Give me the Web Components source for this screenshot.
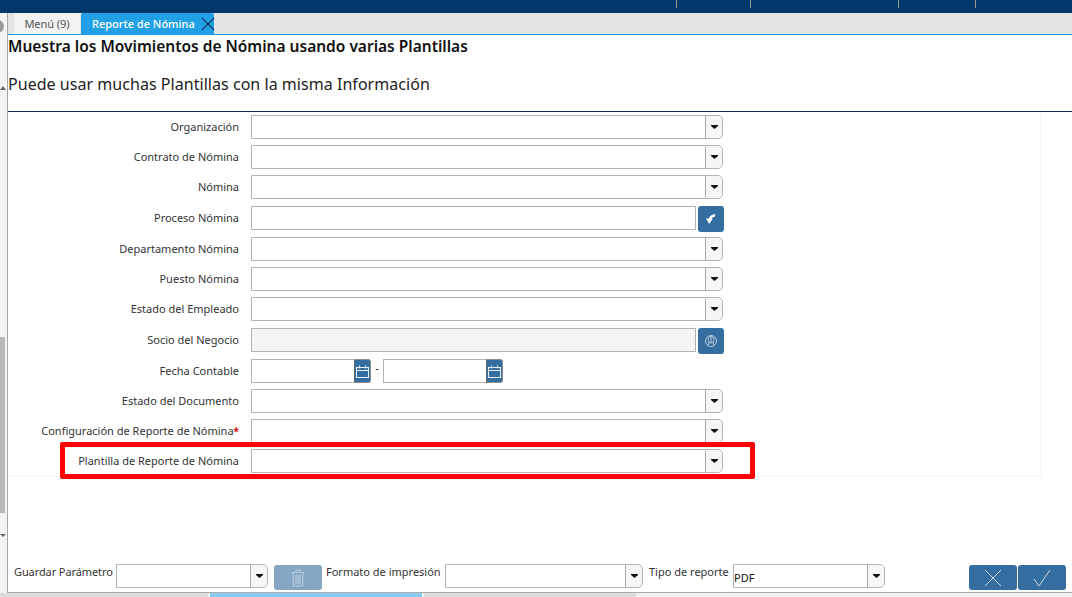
<!DOCTYPE html>
<html lang="es"><head><meta charset="utf-8"><title>Reporte de Nómina</title>
<style>
html,body{margin:0;padding:0;height:597px;width:1072px;overflow:hidden;background:#fff;font-family:"Noto Sans","Open Sans",sans-serif;color:#333}
</style></head><body>
<app-shell>
  <top-bar slot="top"></top-bar>
  <tab-strip slot="tabs"></tab-strip>
  <side-rail slot="rail"></side-rail>
  <process-head slot="head" title-text="Muestra los Movimientos de Nómina usando varias Plantillas" help="Puede usar muchas Plantillas con la misma Información"></process-head>
  <form-panel slot="form">
    <form-field label="Organización" kind="combo"></form-field>
    <form-field label="Contrato de Nómina" kind="combo"></form-field>
    <form-field label="Nómina" kind="combo"></form-field>
    <form-field label="Proceso Nómina" kind="search" icon="back"></form-field>
    <form-field label="Departamento Nómina" kind="combo"></form-field>
    <form-field label="Puesto Nómina" kind="combo"></form-field>
    <form-field label="Estado del Empleado" kind="combo"></form-field>
    <form-field label="Socio del Negocio" kind="search" icon="partner" disabled></form-field>
    <form-field label="Fecha Contable" kind="date"></form-field>
    <form-field label="Estado del Documento" kind="combo"></form-field>
    <form-field label="Configuración de Reporte de Nómina" kind="combo" required></form-field>
    <form-field label="Plantilla de Reporte de Nómina" kind="combo"></form-field>
  </form-panel>
  <action-bar slot="foot"></action-bar>
  <bottom-tabs slot="bottom"></bottom-tabs>
</app-shell>
<script>
const def=(n,html)=>customElements.define(n,class extends HTMLElement{
  constructor(){super();this.attachShadow({mode:'open'});if(typeof html!=='function')this.shadowRoot.innerHTML=html}
  connectedCallback(){if(typeof html==='function')this.shadowRoot.innerHTML=html(this)}
});
const ARROW='<svg width="7" height="4" viewBox="0 0 7 4"><path d="M0 0h7v1L3.500 4 0 1z" fill="#111"/></svg>';

def('app-shell',`<style>
:host{display:grid;grid-template-columns:8px 1fr;grid-template-rows:13px 22px 1fr 33px auto;width:1072px;height:597px;position:relative}
.top{grid-column:1/3}.tabs{grid-column:2;background:#e5e5e5}
.rail{grid-column:1;grid-row:2/5}
.main{grid-column:2;display:flex;flex-direction:column;min-height:0}
.foot{grid-column:2}
.bottom{grid-column:1/3}
</style>
<div class="top"><slot name="top"></slot></div>
<div class="rail"><slot name="rail"></slot></div>
<div class="tabs"><slot name="tabs"></slot></div>
<div class="main"><slot name="head"></slot><slot name="form"></slot></div>
<div class="foot"><slot name="foot"></slot></div>
<div class="bottom"><slot name="bottom"></slot></div>`);

def('top-bar',`<style>
:host{display:block;height:13px;background:#00386b;position:relative}
i{width:1px;height:8px;background:#a09a90;display:block;position:absolute;top:0}
</style><i style="left:676px"></i><i style="left:750px"></i><i style="left:898px"></i><i style="left:975px"></i>`);

def('tab-strip',`<style>
:host{display:flex;height:22px;box-sizing:border-box;border-bottom:1px solid #1e9be6;padding-left:6px;gap:1px;font-size:11px}
div{height:21px;display:flex;align-items:center;box-sizing:border-box}
.a{width:66px;background:#f2f2f2;color:#555;justify-content:center;letter-spacing:-.05px}
.b{width:133px;background:#22a0e6;color:#fff;font-weight:500;padding-left:11px;border-radius:2px 2px 0 0;white-space:nowrap}
svg{margin-left:6px;flex:none}
</style><div class="a">Menú (9)</div><div class="b">Reporte de Nómina<svg width="14" height="14" viewBox="0 0 14 14"><path d="M1 1l12 12M13 1L1 13" stroke="#0c3a63" stroke-width="1.2" fill="none"/></svg></div>`);

def('side-rail',`<style>
:host{display:block;height:100%;background:#f3f3f3;border-right:1px solid #a8a8a8;box-sizing:border-box;width:8px;position:relative;overflow:hidden}
.c{position:absolute;left:-9px;top:7px;width:13px;height:13px;border-radius:50%;background:#999}
.t{position:absolute;left:0;top:324px;width:5px;height:176px;background:#b9b9b9}
.u,.d{position:absolute;left:0;width:0;height:0;border-left:3px solid transparent;border-right:3px solid transparent}
.u{top:73px;border-bottom:4px solid #666}.d{top:521px;border-top:3px solid #666}
</style><div class="c"></div><div class="u"></div><div class="t"></div><div class="d"></div>`);

def('process-head',h=>`<style>
:host{display:block;height:77px;box-sizing:border-box;border-bottom:1px solid #0a2f52;color:#111}
h1{margin:0;font-size:15.5px;line-height:22px;font-weight:600}
p{margin:16px 0 0;font-size:16px;line-height:22px;color:#222;letter-spacing:.04px}
</style><h1>${h.getAttribute('title-text')||''}</h1><p>${h.getAttribute('help')||''}</p>`);

def('form-panel',`<style>
:host{display:block;width:1033px;height:364.8px;box-sizing:border-box;padding-top:3px;border-right:1px solid #f5f5f5;border-bottom:1px solid #f5f5f5;position:relative}
.g{display:grid;grid-template-rows:30px 30px 31px 31px 30px 30px 31px 31px 30px 30px 30px 30px}
.mark{position:absolute;left:52px;top:330px;width:695px;height:37px;box-sizing:border-box;border:5px solid #f00;border-radius:2px;pointer-events:none}
</style><div class="g"><slot></slot></div><div class="mark"></div>`);

const combo=(w,v='')=>`<span class="combo" style="width:${w}px"><span class="v">${v}</span><span class="dd">${ARROW}</span></span>`;
const CAL='<svg width="13" height="13" viewBox="0 0 13 13" fill="none" stroke="#e8f2fa" stroke-width="1"><rect x=".5" y="2.5" width="12" height="10"/><path d="M.5 5.5h12M3.5 .5v3M9.5 .5v3"/></svg>';
const date=()=>`<span class="date"><span class="df"></span><span class="cal">${CAL}</span></span>`;
const ICONS={
 back:'<svg width="12" height="12" viewBox="0 0 12 12"><path d="M10.500 1C7.500 1.300 4.800 2.500 3.800 5.500H1L4.200 11 7.800 5.500H6.500C6.800 4.500 8.300 3.800 9.700 3.900z" fill="#fff"/></svg>',
 partner:'<svg width="14" height="14" viewBox="0 0 14 14" fill="none" stroke="#b7c9da" stroke-width="1"><circle cx="7" cy="7" r="5.500"/><ellipse cx="7" cy="5.800" rx="3" ry="3.300"/><path d="M5 8.500L4.200 11.500M9 8.500L9.800 11.500M7 2.500V9"/></svg>'
};
def('form-field',h=>{
 const k=h.getAttribute('kind'),dis=h.hasAttribute('disabled');
 let c='';
 if(k==='combo')c=combo(472);
 if(k==='search')c=`<span class="in ${dis?'dis':''}" style="width:445px"></span><span class="sb">${ICONS[h.getAttribute('icon')]}</span>`;
 if(k==='date')c=date()+'<span class="dash">-</span>'+date();
 return `<style>
:host{display:grid;grid-template-columns:231px 1fr;column-gap:12px;align-items:start;font-size:11px;color:#333}
label{text-align:right;line-height:24px;white-space:nowrap}
label b{color:#d00;font-weight:700;font-size:10px}
.c{display:flex;height:24px;align-items:flex-start}
.in{height:24px;box-sizing:border-box;border:1px solid #b4b4b4;background:#fff;display:block}
.dis{background:#f5f5f5}
.combo{display:flex;height:24px;box-sizing:border-box;border:1px solid #b4b4b4;border-radius:0 5px 5px 0;background:#fff}
.v{flex:1}
.dd{width:16px;background:#f6f6f6;border-left:1px solid #a8a8a8;border-radius:0 5px 5px 0;display:flex;align-items:center;justify-content:center}
.sb{margin-left:2px;width:26px;height:26px;border-radius:3px;background:#346d9f;display:flex;align-items:center;justify-content:center}
.date{display:flex;width:120px;height:24px}
.df{flex:1;box-sizing:border-box;border:1px solid #b4b4b4;border-right:0;background:#fff}
.cal{width:17px;background:#346d9f;border:1px solid #8b8b8b;border-left-color:#666;box-sizing:border-box;border-radius:0 3px 3px 0;display:flex;align-items:center;justify-content:center}
.dash{width:12px;text-align:center;line-height:18px;color:#222}
</style><label>${h.getAttribute('label')}${h.hasAttribute('required')?'<b>*</b>':''}</label><div class="c">${c}</div>`});

def('action-bar',`<style>
:host{display:flex;height:33px;box-sizing:border-box;padding:4px 6px 0 6px;align-items:flex-start;font-size:11px;color:#333}
.l{line-height:16px;white-space:nowrap}
.combo{display:flex;height:24px;box-sizing:border-box;border:1px solid #b4b4b4;border-radius:0 5px 5px 0;background:#fff;flex:none}
.v{flex:1;font-size:11px;color:#111;line-height:25px}
.dd{width:16px;background:#f6f6f6;border-left:1px solid #a8a8a8;border-radius:0 5px 5px 0;display:flex;align-items:center;justify-content:center}
.btn{height:25px;width:48px;border-radius:3px;background:#346d9f;display:flex;align-items:center;justify-content:center;flex:none}
.trash{background:#84a6c3;margin:1px 4px 0 6px}
.sp{flex:1}
</style>
<span class="l" style="width:102px;letter-spacing:-.1px">Guardar Parámetro</span>${combo(152)}
<span class="btn trash"><svg width="14" height="18" viewBox="0 0 14 18" fill="none" stroke="#b5cadb" stroke-width="1.2"><path d="M.5 3.500h13M5 3.500V1h4v2.500M2 3.500l.6 13.500h8.800l.6-13.500M5 6v9M7 6v9M9 6v9"/></svg></span>
<span class="l" style="width:119px">Formato de impresión</span>${combo(198)}
<span class="l" style="width:84px;margin-left:6px">Tipo de reporte</span>${combo(152,'PDF')}
<span class="sp"></span>
<span class="btn" style="margin:1px 1px 0 0"><svg width="18" height="18" viewBox="0 0 18 18" fill="none" stroke="#c8d8e6" stroke-width="1"><path d="M1 1l16 16M17 1L1 17"/></svg></span>
<span class="btn" style="margin-top:1px"><svg width="18" height="18" viewBox="0 0 18 18" fill="none" stroke="#c8d8e6" stroke-width="1"><path d="M1 10l5 7L17 1"/></svg></span>`);

def('bottom-tabs',`<style>
:host{display:flex;height:5px;box-sizing:border-box;border-top:1px solid #aaa;background:#eef0f1;gap:2px;margin-top:-1px}
i{display:block;height:4px}
</style><i style="width:208px;background:#dcdcdc"></i><i style="width:212px;background:#8ccbf0"></i><i style="width:212px;background:#dcdcdc"></i>`);
</script>
</body></html>
